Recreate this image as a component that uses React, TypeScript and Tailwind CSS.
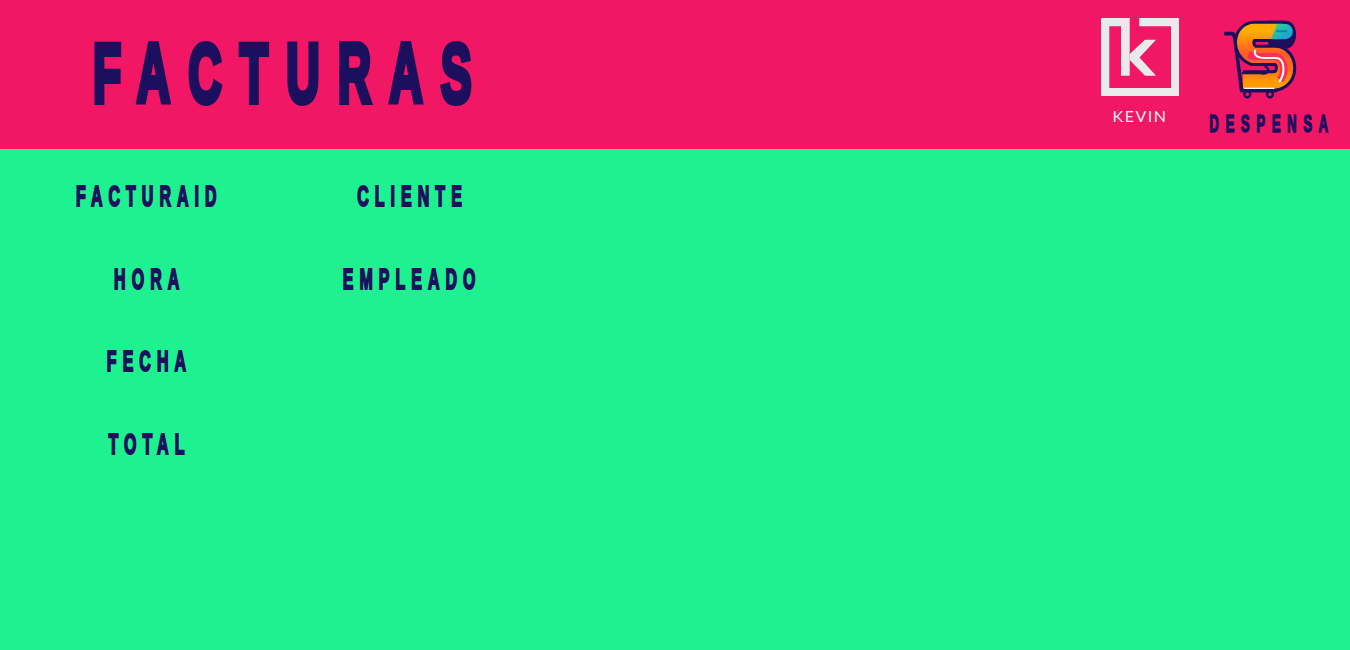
const fieldFont = "font-['Liberation_Sans',sans-serif] font-bold text-[#1b0f5e] whitespace-nowrap";

const leftFields = ['FACTURAID', 'HORA', 'FECHA', 'TOTAL'];
const rightFields = ['CLIENTE', 'EMPLEADO'];

function KevinLogo() {
  return (
    <svg width="78" height="78" viewBox="0 0 78 78" aria-hidden="true">
      <path
        fill="#eaeaea"
        fillRule="evenodd"
        d="M0 0H28.7V57.7H20V8.3H8.3V70H70V8.3H38.3V0H78V78H0Z"
      />
      <path fill="#eaeaea" d="M28.7 36L44 21.7H55L38.5 39.5L55 57.7H44L28.7 42Z" />
    </svg>
  );
}

function DespensaLogo() {
  const sPath = 'M205 58H118C84 58 76 114 115 130H180C222 132 224 207 175 207H84';
  return (
    <svg width="90" height="95" viewBox="0 0 270 285" aria-hidden="true">
      <defs>
        <linearGradient id="sFill" x1="0" y1="0" x2="0" y2="1">
          <stop offset="0" stopColor="#ffae00" />
          <stop offset="0.45" stopColor="#ff5a2a" />
          <stop offset="0.75" stopColor="#ff6a1a" />
          <stop offset="1" stopColor="#ff9a00" />
        </linearGradient>
        <linearGradient id="topFill" x1="0" y1="0" x2="1" y2="1">
          <stop offset="0" stopColor="#35d88a" />
          <stop offset="1" stopColor="#1496e6" />
        </linearGradient>
      </defs>
      <path d="M32 65H50C56 65 58 70 59 76L80 236H182" fill="none" stroke="#1b0f5e" strokeWidth="11" strokeLinecap="round" strokeLinejoin="round" />
      <path d={sPath} fill="none" stroke="#1b0f5e" strokeWidth="64" />
      <path d="M190 26H212C254 26 256 112 205 112H160V26Z" fill="#1b0f5e" />
      <path d={sPath} fill="none" stroke="url(#sFill)" strokeWidth="46" />
      <path d="M100 128L118 134H180C208 136 214 180 196 204" fill="none" stroke="#f5305a" strokeWidth="22" />
      <path d="M168 82L186 36H212C242 38 242 84 205 82Z" fill="url(#topFill)" />
      <path d="M186 58H214" stroke="#1b7fb8" strokeWidth="6" strokeLinecap="round" />
      <path d="M120 116C116 132 130 138 150 138H185C208 140 212 182 194 208" fill="none" stroke="#ffffff" strokeWidth="6" strokeLinecap="round" />
      <path d="M84 183H135C158 188 168 174 152 164" fill="none" stroke="#1b0f5e" strokeWidth="8" strokeLinecap="round" />
      <path d="M88 229H178" stroke="#ffffff" strokeWidth="4" />
      <circle cx="97" cy="247" r="9" fill="#f11765" stroke="#1b0f5e" strokeWidth="7" />
      <circle cx="165" cy="247" r="9" fill="#f11765" stroke="#1b0f5e" strokeWidth="7" />
    </svg>
  );
}

function Field({ label }: { label: string }) {
  return (
    <div className="h-[82.7px] flex items-center justify-center">
      <span className={`shrink-0 scale-x-[0.55] text-[29px] leading-none tracking-[11px] [-webkit-text-stroke:2px_#1b0f5e] ${fieldFont}`}>
        {label}
      </span>
    </div>
  );
}

export default function App() {
  return (
    <div className="min-h-[650px] flex flex-col bg-[#1ef190]">
      <header className="h-[149px] bg-[#f11765] flex items-center justify-between pl-[93px] pr-[20px]">
        <h1 className={`-mt-[3px] origin-left scale-x-[0.55] text-[84px] leading-none tracking-[33px] [-webkit-text-stroke:6px_#1b0f5e] ${fieldFont}`}>
          FACTURAS
        </h1>
        <div className="self-start flex items-start gap-[29px] pt-[12px]">
          <div className="flex flex-col items-center mt-[6px]">
            <KevinLogo />
            <span className="mt-[10px] text-[16px] leading-[20px] tracking-[1.5px] text-[#eaeaea] font-['Lato',sans-serif]">
              KEVIN
            </span>
          </div>
          <div className="w-[122px] flex flex-col">
            <div className="ml-[7px]">
              <DespensaLogo />
            </div>
            <div className="h-[26px] mt-[4px] pl-[6px] flex justify-center">
              <span className={`shrink-0 scale-x-[0.55] text-[24px] leading-[26px] tracking-[12px] [-webkit-text-stroke:1.5px_#1b0f5e] ${fieldFont}`}>
                DESPENSA
              </span>
            </div>
          </div>
        </div>
      </header>
      <main className="grid grid-cols-[263px_263px] pl-[18px] pt-[6px]">
        <div>
          {leftFields.map((label) => (
            <Field key={label} label={label} />
          ))}
        </div>
        <div>
          {rightFields.map((label) => (
            <Field key={label} label={label} />
          ))}
        </div>
      </main>
    </div>
  );
}
